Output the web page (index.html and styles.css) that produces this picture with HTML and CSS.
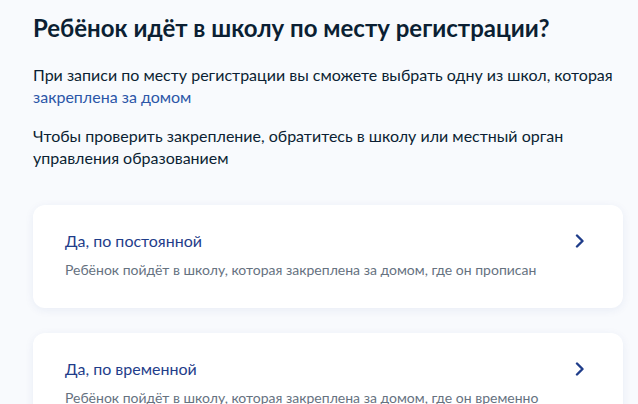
FILE: index.html
```html
<!DOCTYPE html>
<html lang="ru">
<head>
<meta charset="utf-8">
<link rel="stylesheet" href="styles.css">
</head>
<body>
<main class="page">
  <h1 class="title">Ребёнок идёт в школу по месту регистрации?</h1>
  <p class="text">При записи по месту регистрации вы сможете выбрать одну из школ, которая <a class="link" href="#">закреплена за домом</a></p>
  <p class="text">Чтобы проверить закрепление, обратитесь в школу или местный орган управления образованием</p>
  <div class="options">
    <a class="card" href="#">
      <div class="card-head">
        <span class="card-title">Да, по постоянной</span>
        <svg class="chev" width="10" height="14" viewBox="0 0 10 14"><path d="M2 1.5 L7.5 7 L2 12.5" fill="none" stroke="#1f3d8a" stroke-width="2.4" stroke-linecap="round" stroke-linejoin="round"/></svg>
      </div>
      <div class="card-sub">Ребёнок пойдёт в школу, которая закреплена за домом, где он прописан</div>
    </a>
    <a class="card" href="#">
      <div class="card-head">
        <span class="card-title">Да, по временной</span>
        <svg class="chev" width="10" height="14" viewBox="0 0 10 14"><path d="M2 1.5 L7.5 7 L2 12.5" fill="none" stroke="#1f3d8a" stroke-width="2.4" stroke-linecap="round" stroke-linejoin="round"/></svg>
      </div>
      <div class="card-sub">Ребёнок пойдёт в школу, которая закреплена за домом, где он временно зарегистрирован</div>
    </a>
  </div>
</main>
</body>
</html>
```
FILE: styles.css
```css
html, body {
  margin: 0;
  padding: 0;
  background: #f8fafd;
  overflow: hidden;
}
body {
  font-family: Lato, "Noto Sans", sans-serif;
  color: #0b1f33;
}
.page {
  padding: 12px 15px 0 33px;
}
.title {
  margin: 0 0 20px;
  font-size: 24px;
  line-height: 32px;
  font-weight: 700;
  color: #0b1f33;
}
.text {
  margin: 0 0 17px;
  font-size: 16px;
  line-height: 22px;
  color: #0b1f33;
}
.text:last-of-type {
  margin-bottom: 0;
}
.link {
  color: #2b56a8;
  text-decoration: none;
}
.options {
  margin-top: 36px;
  display: flex;
  flex-direction: column;
  gap: 25px;
  width: 590px;
}
.card {
  display: block;
  background: #ffffff;
  border-radius: 12px;
  box-shadow: 0 2px 10px rgba(30, 60, 140, 0.07);
  padding: 24px 32px 28px;
  text-decoration: none;
}
.card-head {
  display: flex;
  align-items: center;
  justify-content: space-between;
  height: 24px;
}
.card-title {
  font-size: 16px;
  line-height: 24px;
  color: #1f3d8a;
}
.chev {
  margin-right: 6px;
}
.card-sub {
  margin-top: 7px;
  font-size: 14px;
  line-height: 20px;
  color: #66727f;
}
```
